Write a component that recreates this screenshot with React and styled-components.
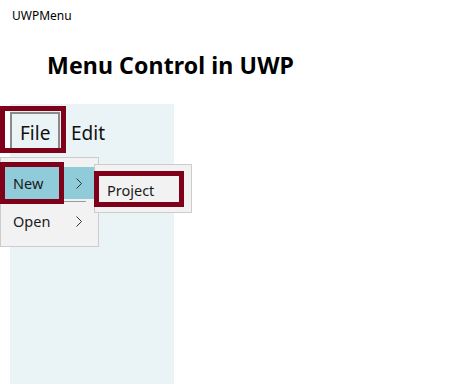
import React from "react";
import styled, { createGlobalStyle } from "styled-components";

const Global = createGlobalStyle`
  html, body { margin: 0; padding: 0; background: #ffffff; }
  body { font-family: "Noto Sans", "Open Sans", sans-serif; color: #000; overflow: hidden; }
`;

const Window = styled.div`
  width: 476px;
  height: 384px;
  display: flex;
  flex-direction: column;
  overflow: hidden;
`;

const TitleBar = styled.div`
  height: 32px;
  line-height: 32px;
  padding-left: 12px;
  font-size: 12px;
`;

const Heading = styled.h1`
  margin: 18px 0 0 47px;
  height: 54px;
  font-size: 23.1px;
  font-weight: 700;
  line-height: 30px;
  letter-spacing: 0.1px;
`;

const Stage = styled.div`
  position: relative;
  flex: 1;
`;

const Panel = styled.div`
  margin-left: 10px;
  width: 164px;
  height: 100%;
  background: #eaf4f6;
  padding-top: 8px;
  box-sizing: border-box;
`;

const MenuBar = styled.div`
  display: flex;
  align-items: center;
  gap: 11px;
`;

const BarItem = styled.div`
  height: 38px;
  box-sizing: border-box;
  display: flex;
  align-items: center;
  padding: ${(p) => (p.$open ? "4px 0 0 8px" : "4px 0 0 0")};
  border: ${(p) => (p.$open ? "2px solid #8a8a8a" : "none")};
  width: ${(p) => (p.$open ? "50px" : "auto")};
  font-size: 19px;
  color: #111;
`;

const Flyout = styled.div`
  position: absolute;
  left: ${(p) => p.$left}px;
  top: ${(p) => p.$top}px;
  width: ${(p) => p.$width}px;
  box-sizing: border-box;
  background: #f2f2f2;
  border: 1px solid #cccccc;
  padding: ${(p) => p.$pad};
  display: flex;
  flex-direction: column;
`;

const Item = styled.div`
  height: ${(p) => p.$h}px;
  display: flex;
  align-items: center;
  justify-content: space-between;
  padding: 0 15px 0 ${(p) => p.$pl}px;
  font-size: 14.5px;
  color: #1a1a1a;
  background: ${(p) => (p.$active ? "#8fcbd9" : "transparent")};
`;

const Separator = styled.div`
  height: 1px;
  margin: 2px 11px 0 5px;
  background: #9a9a9a;
`;

const Mark = styled.div`
  position: absolute;
  left: ${(p) => p.$x}px;
  top: ${(p) => p.$y}px;
  width: ${(p) => p.$w}px;
  height: ${(p) => p.$h}px;
  box-sizing: border-box;
  border: 5px solid #7f0019;
  pointer-events: none;
`;

const Chevron = () => (
  <svg width="6" height="11" viewBox="0 0 6 11">
    <path d="M0.5 0.5 L5.5 5.5 L0.5 10.5" fill="none" stroke="#333" strokeWidth="1" />
  </svg>
);

export default function App() {
  return (
    <Window>
      <Global />
      <TitleBar>UWPMenu</TitleBar>
      <Heading>Menu Control in UWP</Heading>
      <Stage>
        <Panel>
          <MenuBar>
            <BarItem $open>File</BarItem>
            <BarItem>Edit</BarItem>
          </MenuBar>
        </Panel>
        <Flyout $left={0} $top={53} $width={99} $pad="9px 1px 6px 1px" style={{ height: 90 }}>
          <Item $h={33} $pl={11} $active>
            New <Chevron />
          </Item>
          <Separator />
          <Item $h={39} $pl={11}>
            Open <Chevron />
          </Item>
        </Flyout>
        <Flyout $left={94} $top={60} $width={98} $pad="6px 1px 3px 1px">
          <Item $h={38} $pl={11}>Project</Item>
        </Flyout>
        <Mark $x={0} $y={2} $w={66} $h={47} />
        <Mark $x={0} $y={58} $w={64} $h={42} />
        <Mark $x={94} $y={67} $w={90} $h={36} />
      </Stage>
    </Window>
  );
}
